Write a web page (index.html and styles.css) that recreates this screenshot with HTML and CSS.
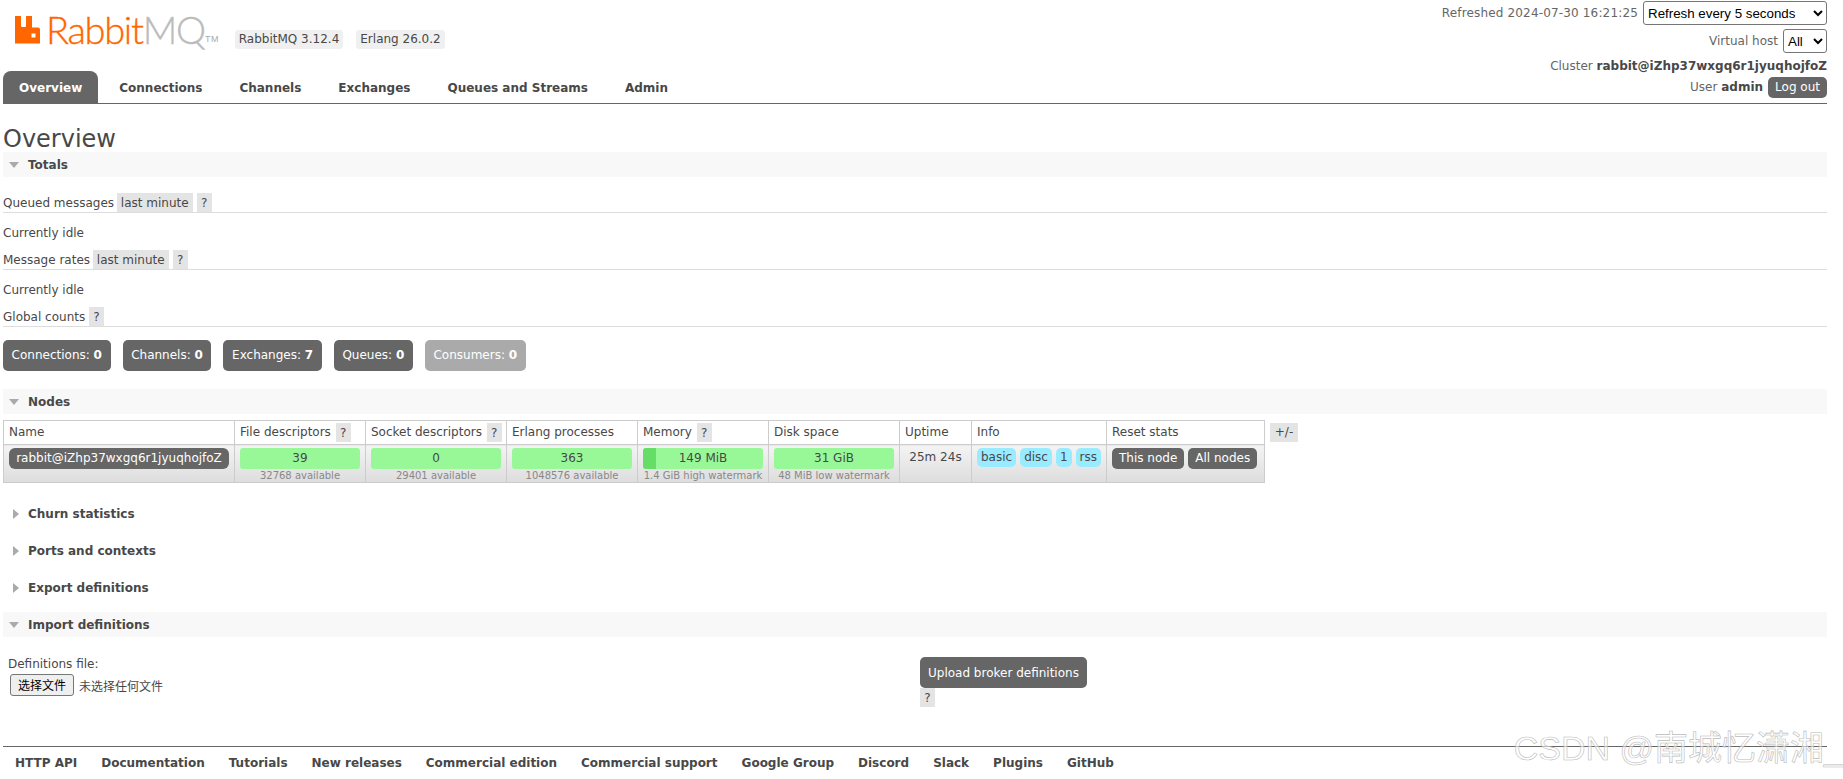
FILE: index.html
```html
<!DOCTYPE html>
<html lang="en">
<head>
<meta charset="utf-8">
<title>RabbitMQ Management</title>
<link rel="stylesheet" href="styles.css">
</head>
<body>
<header class="header">
  <div class="header-left">
    <div class="brand">
      <svg class="logo-icon" width="27" height="29" viewBox="0 0 27 29"><path fill="#f60" fill-rule="evenodd" d="M1 1h5.500a.5.5 0 0 1 .5.5V11a1 1 0 0 0 1 1h3a1 1 0 0 0 1-1V1.500a.5.5 0 0 1 .5-.5H18v11.500h6a2 2 0 0 1 2 2V28.500H1zM17.500 18.500v4h4v-4z"/></svg>
      <span class="logo-text"><span class="logo-orange">Rabbit</span><span class="logo-grey">MQ</span></span>
      <span class="logo-tm">TM</span>
      <span class="version v1">RabbitMQ 3.12.4</span>
      <span class="version v2">Erlang 26.0.2</span>
    </div>
    <nav class="tabs">
      <a class="tab active">Overview</a>
      <a class="tab">Connections</a>
      <a class="tab">Channels</a>
      <a class="tab">Exchanges</a>
      <a class="tab">Queues and Streams</a>
      <a class="tab">Admin</a>
    </nav>
  </div>
  <div class="header-right">
    <div class="hr-row"><span class="refreshed">Refreshed 2024-07-30 16:21:25</span><select class="sel sel-refresh"><option>Refresh every 5 seconds</option></select></div>
    <div class="hr-row hr-vhost"><span>Virtual host</span><select class="sel sel-vhost"><option>All</option></select></div>
    <div class="hr-row hr-cluster"><span>Cluster&nbsp;<b>rabbit@iZhp37wxgq6r1jyuqhojfoZ</b></span></div>
    <div class="hr-row hr-user"><span>User&nbsp;<b>admin</b></span><span class="logout">Log out</span></div>
  </div>
</header>

<main>
  <h1 class="title">Overview</h1>

  <div class="bar"><i class="arrow-down"></i>Totals</div>
  <div class="rate-head first">Queued messages <span class="tag tag-range">last minute</span><span class="tag tag-q">?</span></div>
  <p class="idle">Currently idle</p>
  <div class="rate-head second">Message rates <span class="tag tag-range">last minute</span><span class="tag tag-q">?</span></div>
  <p class="idle idle2">Currently idle</p>
  <div class="rate-head third">Global counts <span class="tag tag-q tag-q-tight">?</span></div>

  <div class="counts">
    <span class="count">Connections: <b>0</b></span>
    <span class="count">Channels: <b>0</b></span>
    <span class="count">Exchanges: <b>7</b></span>
    <span class="count">Queues: <b>0</b></span>
    <span class="count disabled">Consumers: <b>0</b></span>
  </div>

  <div class="bar"><i class="arrow-down"></i>Nodes</div>
  <div class="nodes-wrap">
    <table class="nodes">
      <colgroup>
        <col class="c1"><col class="c2"><col class="c3"><col class="c4"><col class="c5"><col class="c6"><col class="c7"><col class="c8"><col class="c9">
      </colgroup>
      <thead>
        <tr>
          <th>Name</th>
          <th>File descriptors <span class="tag tag-q th-q">?</span></th>
          <th>Socket descriptors <span class="tag tag-q th-q">?</span></th>
          <th>Erlang processes</th>
          <th>Memory <span class="tag tag-q th-q">?</span></th>
          <th>Disk space</th>
          <th>Uptime</th>
          <th>Info</th>
          <th>Reset stats</th>
        </tr>
      </thead>
      <tbody>
        <tr>
          <td><span class="node-name">rabbit@iZhp37wxgq6r1jyuqhojfoZ</span></td>
          <td><div class="meter">39</div><div class="sub">32768 available</div></td>
          <td><div class="meter">0</div><div class="sub">29401 available</div></td>
          <td><div class="meter">363</div><div class="sub">1048576 available</div></td>
          <td><div class="meter"><span class="meter-fill" style="width:13px"></span><span class="meter-label">149 MiB</span></div><div class="sub">1.4 GiB high watermark</div></td>
          <td><div class="meter">31 GiB</div><div class="sub">48 MiB low watermark</div></td>
          <td class="uptime">25m 24s</td>
          <td><div class="pills"><span class="pill">basic</span><span class="pill">disc</span><span class="pill">1</span><span class="pill">rss</span></div></td>
          <td><div class="resets"><span class="reset">This node</span><span class="reset">All nodes</span></div></td>
        </tr>
      </tbody>
    </table>
    <span class="plusminus">+/-</span>
  </div>

  <div class="fold first-fold"><i class="arrow-right"></i>Churn statistics</div>
  <div class="fold"><i class="arrow-right"></i>Ports and contexts</div>
  <div class="fold"><i class="arrow-right"></i>Export definitions</div>
  <div class="bar fold-bar"><i class="arrow-down"></i>Import definitions</div>

  <div class="import">
    <div class="import-left">
      <div class="def-label">Definitions file:</div>
      <div class="file-row"><span class="file-btn">选择文件</span><span class="file-none">未选择任何文件</span></div>
    </div>
    <div class="import-right">
      <span class="upload">Upload broker definitions</span>
      <span class="tag tag-q upload-q">?</span>
    </div>
  </div>
</main>

<footer class="footer">
  <a>HTTP API</a><a>Documentation</a><a>Tutorials</a><a>New releases</a><a>Commercial edition</a><a>Commercial support</a><a>Google Group</a><a>Discord</a><a>Slack</a><a>Plugins</a><a>GitHub</a>
</footer>
<div class="watermark">CSDN @南城忆潇湘_</div>
</body>
</html>
```
FILE: styles.css
```css
* { box-sizing: border-box; }
html, body { height: 100%; overflow: hidden; }
body {
  margin: 0;
  padding: 0 16px 0 3px;
  background: #fff;
  color: #484848;
  font: 12px/15px Verdana, "DejaVu Sans", sans-serif;
  position: relative;
}
b { font-weight: 700; }

/* header */
.header {
  display: flex;
  justify-content: space-between;
  height: 104px;
  border-bottom: 1px solid #666;
}
.brand {
  display: flex;
  align-items: flex-start;
  height: 71px;
  padding: 15px 0 0 11px;
}
.logo-icon { flex: none; margin-right: 5px; }
.logo-text {
  width: 157px;
  font: 300 38px/29px Lato, sans-serif;
  letter-spacing: -1.300px;
  white-space: nowrap;
  -webkit-text-stroke: .35px currentColor;
}
.logo-orange { color: #f60; }
.logo-grey { color: #bbb; }
.logo-tm {
  font: 400 9px/10px "Liberation Sans", sans-serif;
  color: #aaa;
  margin: 19px 0 0 2px;
  letter-spacing: .4px;
}
.version {
  margin-top: 15px;
  height: 19px;
  line-height: 19px;
  padding: 0 4px;
  background: #f0f0f0;
  border-radius: 3px;
  white-space: nowrap;
}
.v1 { margin-left: 16px; }
.v2 { margin-left: 13px; }
.tabs { display: flex; }
.tab {
  height: 32px;
  line-height: 34px;
  padding: 0 16px;
  margin-right: 5px;
  font-weight: 700;
  color: #484848;
  border-radius: 8px 8px 0 0;
}
.tab.active { background: #666; color: #fff; }

.header-right {
  display: flex;
  flex-direction: column;
  align-items: flex-end;
  padding-top: 1px;
  color: #666;
}
.hr-row { display: flex; align-items: center; white-space: nowrap; }
.refreshed { letter-spacing: .16px; }
.sel {
  height: 24px;
  margin-left: 5px;
  font: 13.330px "Liberation Sans", sans-serif;
  color: #000;
  background: #fff;
  border: 1px solid #767676;
  border-radius: 3px;
}
.sel-refresh { width: 184px; }
.sel-vhost { width: 44px; }
.hr-vhost { margin-top: 4px; }
.hr-cluster { margin-top: 6px; height: 15px; }
.hr-cluster b, .hr-user b { color: #484848; }
.hr-user { margin-top: 3px; }
.logout {
  margin-left: 5px;
  height: 21px;
  line-height: 21px;
  padding: 0 7px;
  background: #666;
  color: #fff;
  border-radius: 5px;
}

/* main */
.title {
  margin: 20px 0 0;
  height: 28px;
  font-size: 24px;
  line-height: 30px;
  font-weight: 400;
  color: #484848;
}
.bar {
  height: 25px;
  padding-top: 1px;
  background: #f8f8f8;
  font-weight: 700;
  display: flex;
  align-items: center;
}
.arrow-down {
  width: 0;
  height: 0;
  margin: 0 9px 0 6px;
  border-left: 5.500px solid transparent;
  border-right: 5.500px solid transparent;
  border-top: 6px solid #aaa;
}
.arrow-right {
  width: 0;
  height: 0;
  margin: 0 9px 0 10px;
  border-top: 5.500px solid transparent;
  border-bottom: 5.500px solid transparent;
  border-left: 6px solid #aaa;
}
.rate-head {
  height: 20px;
  line-height: 20px;
  border-bottom: 1px solid #ddd;
  white-space: pre;
}
.rate-head.first { margin-top: 16px; }
.rate-head.second { margin-top: 9px; }
.rate-head.third { margin-top: 9px; }
.idle { margin: 13px 0 0; height: 15px; }
.tag {
  display: inline-block;
  height: 19px;
  line-height: 20px;
  padding: 0 4px;
  background: #e4e4e4;
  vertical-align: top;
}
.tag-range { margin-left: -1px; }
.tag-q { width: 15px; padding: 0; text-align: center; margin-left: 4px; }
.tag-q-tight { margin-left: 0; }

.counts { display: flex; gap: 12px; margin: 13px 0 18px; }
.count {
  height: 31px;
  line-height: 31px;
  padding: 0 8.600px;
  background: #666;
  color: #fff;
  border-radius: 5px;
}
.count.disabled { background: #aaa; }

.nodes-wrap { display: flex; align-items: flex-start; margin-top: 6px; }
.nodes {
  table-layout: fixed;
  width: 1261px;
  border-collapse: collapse;
  border: 1px solid #ccc;
}
.c1 { width: 231px; }
.c2 { width: 131px; }
.c3 { width: 141px; }
.c4 { width: 131px; }
.c5 { width: 131px; }
.c6 { width: 131px; }
.c7 { width: 72px; }
.c8 { width: 135px; }
.c9 { width: 158px; }
.nodes th {
  height: 24px;
  padding: 0 0 0 5px;
  text-align: left;
  font-weight: 400;
  line-height: 19px;
  background: #fff;
  border: 1px solid #ccc;
  vertical-align: middle;
  white-space: nowrap;
}
.nodes td {
  height: 38px;
  padding: 3px 5px 0;
  vertical-align: top;
  border: 1px solid #ccc;
  background: linear-gradient(#f4f4f4, #ddd);
}
.th-q { margin-left: 1px; height: 19px; }
.node-name {
  display: block;
  height: 21px;
  line-height: 21px;
  background: #666;
  color: #fff;
  border-radius: 6px;
  text-align: center;
  white-space: nowrap;
}
.meter {
  position: relative;
  height: 21px;
  line-height: 21px;
  text-align: center;
  background: #98f898;
  border-radius: 3px;
  overflow: hidden;
}
.meter-fill {
  position: absolute;
  left: 0;
  top: 0;
  bottom: 0;
  background: #66dd66;
}
.meter-label { position: relative; }
.sub {
  font-size: 10px;
  line-height: 13px;
  text-align: center;
  color: #888;
  white-space: nowrap;
}
.uptime { text-align: center; line-height: 19px; }
.pills { display: flex; gap: 4px; }
.pill {
  height: 19px;
  line-height: 19px;
  padding: 0 4px;
  background: #99ebff;
  border-radius: 5px;
}
.resets { display: flex; gap: 4px; }
.reset {
  height: 21px;
  line-height: 21px;
  padding: 0 7px;
  background: #666;
  color: #fff;
  border-radius: 5px;
  white-space: nowrap;
}
.plusminus {
  margin: 3px 0 0 5px;
  width: 28px;
  height: 19px;
  line-height: 19px;
  text-align: center;
  background: #e4e4e4;
}

.fold {
  height: 25px;
  margin-top: 12px;
  padding-top: 1px;
  display: flex;
  align-items: center;
  font-weight: 700;
}
.first-fold { margin-top: 18px; }
.fold-bar { margin-top: 12px; }

.import { display: flex; margin-top: 20px; }
.import-left { width: 917px; padding-left: 5px; }
.def-label { height: 15px; }
.file-row { display: flex; align-items: center; margin-top: 2px; padding-left: 2px; }
.file-btn {
  width: 64px;
  height: 22px;
  line-height: 20px;
  text-align: center;
  background: #efefef;
  border: 1px solid #767676;
  border-radius: 3px;
  color: #000;
  font-family: "Noto Sans CJK SC", sans-serif;
}
.file-none {
  margin-left: 5px;
  color: #484848;
  font-family: "Noto Sans CJK SC", sans-serif;
}
.import-right { display: flex; flex-direction: column; align-items: flex-start; }
.upload {
  height: 31px;
  line-height: 32px;
  padding: 0 8px;
  background: #666;
  color: #fff;
  border-radius: 5px;
}
.upload-q { margin-left: 0; }

.footer {
  display: flex;
  gap: 24px;
  margin-top: 39px;
  padding: 9px 0 0 12px;
  border-top: 1px solid #666;
  font-weight: 700;
  white-space: nowrap;
}

.watermark {
  position: absolute;
  right: 0;
  top: 728px;
  font: 400 34px/40px "Liberation Sans", "Noto Sans CJK SC", sans-serif;
  color: rgba(255, 255, 255, .55);
  -webkit-text-stroke: .6px #bbb;
  white-space: nowrap;
}
```
